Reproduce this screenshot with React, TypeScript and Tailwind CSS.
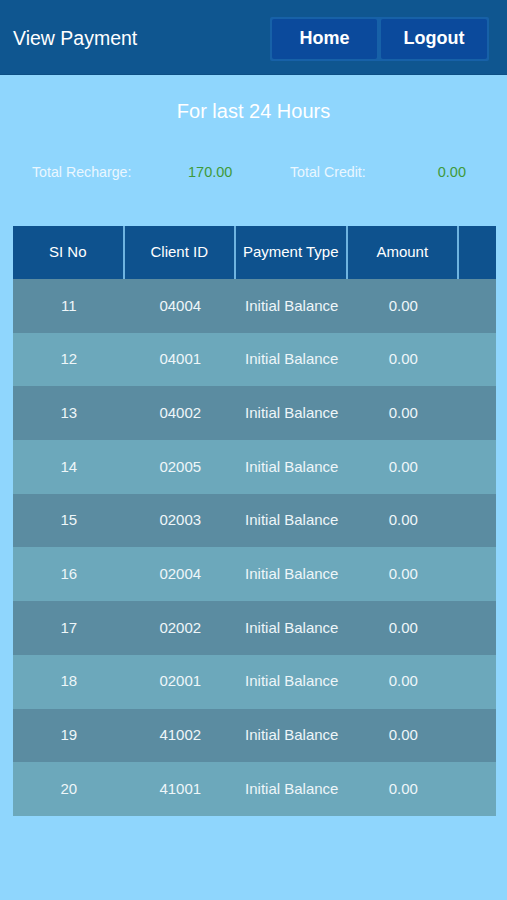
import React from 'react';

// View Payment - last 24h listing

interface PaymentRow {
  sl: number;
  clientId: string;
  type: string;
  amount: string;
}

const rows: PaymentRow[] = [
  { sl: 11, clientId: '04004', type: 'Initial Balance', amount: '0.00' },
  { sl: 12, clientId: '04001', type: 'Initial Balance', amount: '0.00' },
  { sl: 13, clientId: '04002', type: 'Initial Balance', amount: '0.00' },
  { sl: 14, clientId: '02005', type: 'Initial Balance', amount: '0.00' },
  { sl: 15, clientId: '02003', type: 'Initial Balance', amount: '0.00' },
  { sl: 16, clientId: '02004', type: 'Initial Balance', amount: '0.00' },
  { sl: 17, clientId: '02002', type: 'Initial Balance', amount: '0.00' },
  { sl: 18, clientId: '02001', type: 'Initial Balance', amount: '0.00' },
  { sl: 19, clientId: '41002', type: 'Initial Balance', amount: '0.00' },
  { sl: 20, clientId: '41001', type: 'Initial Balance', amount: '0.00' },
];

const headers = ['SI No', 'Client ID', 'Payment Type', 'Amount'];

export default function App() {
  return (
    <div
      className="w-[507px] h-[900px] bg-[#8fd6fd] flex flex-col"
      style={{ fontFamily: '"Liberation Sans", Arial, sans-serif' }}
    >
      {/* Header */}
      <div className="h-[75px] bg-[#0f5690] flex items-center justify-between pl-[13px] pr-[18px] border-b border-[#0c4f85]">
        <h1 className="text-white text-[19.5px] pt-[3px]">View Payment</h1>
        <div className="flex gap-[4px] p-[2px] bg-[#1761a8] rounded-[2px] mt-[3px]">
          <button className="w-[105px] h-[40px] bg-[#0b4a9c] text-white text-[18px] font-bold rounded-[2px]">
            Home
          </button>
          <button className="w-[106px] h-[40px] bg-[#0b4a9c] text-white text-[18px] font-bold rounded-[2px]">
            Logout
          </button>
        </div>
      </div>

      {/* Title */}
      <div className="text-center text-white text-[20px] mt-[24px] leading-[24px]">For last 24 Hours</div>

      {/* Totals */}
      <div className="flex items-center mt-[40px] h-[20px] text-[14.2px] text-[#eaf7ff]">
        <span className="w-[188px] pl-[32px]">Total Recharge:</span>
        <span className="w-[102px] text-[#3f9a3a] text-[14.5px]">170.00</span>
        <span className="w-[176px] flex justify-between">
          <span>Total Credit:</span>
          <span className="text-[#3f9a3a] text-[14.5px]">0.00</span>
        </span>
      </div>

      {/* Table */}
      <div className="mx-[13px] mt-[43px] w-[483px]">
        <div className="flex h-[53px] bg-[#0e528e]">
          {headers.map((h) => (
            <div
              key={h}
              className="w-[111.5px] flex items-center justify-center text-white text-[15px] border-r-2 border-[#6fb4e0]"
            >
              {h}
            </div>
          ))}
          <div className="flex-1" />
        </div>
        {rows.map((r, i) => (
          <div
            key={r.sl}
            className={
              'flex h-[53.7px] text-[15px] text-[#eef6f9] ' +
              (i % 2 === 0 ? 'bg-[#5b8ca1]' : 'bg-[#6ca8bb]')
            }
          >
            <div className="w-[111.5px] flex items-center justify-center">{r.sl}</div>
            <div className="w-[111.5px] flex items-center justify-center">{r.clientId}</div>
            <div className="w-[111.5px] flex items-center justify-center">{r.type}</div>
            <div className="w-[111.5px] flex items-center justify-center">{r.amount}</div>
            <div className="flex-1" />
          </div>
        ))}
      </div>
    </div>
  );
}
